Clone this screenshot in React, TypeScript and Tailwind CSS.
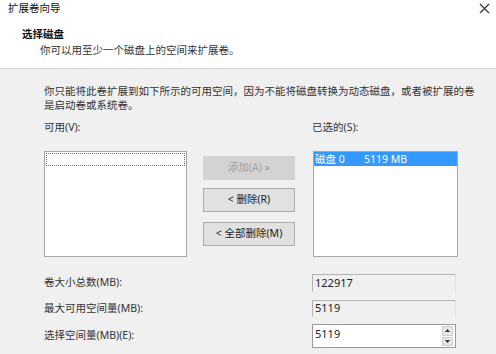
const font = { fontFamily: '"Noto Sans", "Noto Sans CJK SC", sans-serif' };

const ReadOnlyField = ({ value, h }: { value: string; h: string }) => (
  <div
    className={`w-[144px] ${h} bg-[#f0f0f0] border-t border-l border-[#b4b4b4] border-r border-r-[#e2e2e2] border-b border-b-[#f0f0f0] pl-[2px] flex items-center text-[11px] text-[#222]`}
  >
    {value}
  </div>
);

export default function App() {
  return (
    <div
      className="w-[496px] h-[354px] bg-[#f0f0f0] overflow-hidden text-[10.5px] text-[#333]"
      style={font}
    >
      {/* header */}
      <div className="bg-white h-[69px] border-b border-[#d6d6d6]">
        <div className="flex items-center pl-2 h-[16px]">
          <span className="flex-1 text-[#111] leading-[15px]">扩展卷向导</span>
          <div className="w-[40px] h-[16px] flex items-center justify-end pr-[6px]">
            <svg width="11" height="11" viewBox="0 0 11 11" className="shrink-0">
              <line x1="1" y1="1" x2="10" y2="10" stroke="#3a3a3a" strokeWidth="1.2" />
              <line x1="10" y1="1" x2="1" y2="10" stroke="#3a3a3a" strokeWidth="1.2" />
            </svg>
          </div>
        </div>
        <div className="pl-[22px] mt-[11px] leading-[14px] font-bold text-[#111]">选择磁盘</div>
        <div className="pl-[40px] mt-[2px] leading-[14px] text-[#333]">
          你可以用至少一个磁盘上的空间来扩展卷。
        </div>
      </div>

      {/* body */}
      <div className="pl-[44px]">
        <p className="mt-[15px] leading-[14px] w-[440px]">
          你只能将此卷扩展到如下所示的可用空间，因为不能将磁盘转换为动态磁盘，或者被扩展的卷是启动卷或系统卷。
        </p>

        <div className="flex mt-[8px] leading-[14px]">
          <span className="w-[268px]">可用(V):</span>
          <span>已选的(S):</span>
        </div>

        <div className="flex mt-[17px] h-[106px]">
          <div className="w-[143px] bg-white border border-[#a8a8a8] p-px">
            <div className="h-[13px] border border-dotted border-[#777]" />
          </div>
          <div className="flex flex-col ml-[16px] pt-[5px] w-[92px]">
            <div className="h-[24px] bg-[#d3d3d3] flex items-center justify-center text-[#a2a2a2]">
              添加(A) »
            </div>
            <button className="mt-[8px] h-[24px] bg-[#e1e1e1] border border-[#adadad] flex items-center justify-center text-[#222]">
              &lt; 删除(R)
            </button>
            <button className="mt-[10px] h-[24px] bg-[#e1e1e1] border border-[#adadad] flex items-center justify-center text-[#222]">
              &lt; 全部删除(M)
            </button>
          </div>
          <div className="w-[145px] ml-[18px] bg-white border border-[#a8a8a8]">
            <div className="h-[14px] bg-[#3399ff] text-white flex items-center leading-[14px]">
              <span className="w-[50px] pl-px">磁盘 0</span>
              <span>5119 MB</span>
            </div>
          </div>
        </div>

        {/* size fields */}
        <div className="grid grid-cols-[268px_144px] mt-[17px] items-center">
          <span>卷大小总数(MB):</span>
          <ReadOnlyField value="122917" h="h-[18px]" />
          <span className="mt-[8px]">最大可用空间量(MB):</span>
          <div className="mt-[8px]">
            <ReadOnlyField value="5119" h="h-[17px]" />
          </div>
          <span className="mt-[7px]">选择空间量(MB)(E):</span>
          <div className="mt-[7px] w-[144px] h-[24px] bg-white border border-[#9a9a9a] flex">
            <div className="flex-1 pl-[2px] pt-[2px] text-[11px] text-[#222] leading-[14px]">5119</div>
            <div className="w-[13px] flex flex-col gap-px p-px mr-px">
              <div className="flex-1 bg-[#e6e6e6] border border-[#cfcfcf] flex items-center justify-center">
                <svg width="5" height="3" viewBox="0 0 5 3"><path d="M0 3L2.5 0L5 3Z" fill="#333" /></svg>
              </div>
              <div className="flex-1 bg-[#e6e6e6] border border-[#cfcfcf] flex items-center justify-center">
                <svg width="5" height="3" viewBox="0 0 5 3"><path d="M0 0L2.5 3L5 0Z" fill="#333" /></svg>
              </div>
            </div>
          </div>
        </div>
      </div>
    </div>
  );
}
